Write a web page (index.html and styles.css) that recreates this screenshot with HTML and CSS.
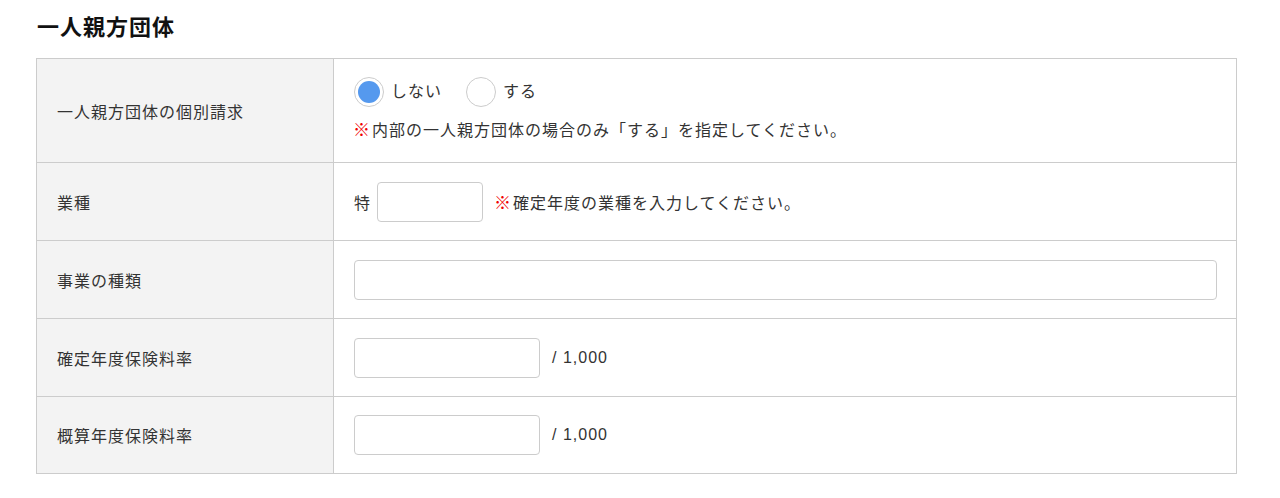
FILE: index.html
```html
<!DOCTYPE html>
<html lang="ja">
<head>
<meta charset="utf-8">
<link rel="stylesheet" href="styles.css">
</head>
<body>
<div class="page">
  <h2 class="title">一人親方団体</h2>
  <table class="form">
    <tr class="row-tall">
      <th>一人親方団体の個別請求</th>
      <td>
        <div class="radios">
          <label class="radio"><span class="dot checked"></span><span>しない</span></label>
          <label class="radio"><span class="dot"></span><span>する</span></label>
        </div>
        <p class="note"><span class="mark">※</span>内部の一人親方団体の場合のみ「する」を指定してください。</p>
      </td>
    </tr>
    <tr>
      <th>業種</th>
      <td>
        <div class="inline">
          <span>特</span>
          <input class="input input-s" type="text">
          <span class="note-inline"><span class="mark">※</span>確定年度の業種を入力してください。</span>
        </div>
      </td>
    </tr>
    <tr>
      <th>事業の種類</th>
      <td><input class="input input-full" type="text"></td>
    </tr>
    <tr>
      <th>確定年度保険料率</th>
      <td>
        <div class="inline rate">
          <input class="input input-m" type="text">
          <span class="num">/ 1,000</span>
        </div>
      </td>
    </tr>
    <tr class="row-last">
      <th>概算年度保険料率</th>
      <td>
        <div class="inline rate">
          <input class="input input-m" type="text">
          <span class="num">/ 1,000</span>
        </div>
      </td>
    </tr>
  </table>
</div>
</body>
</html>
```

FILE: styles.css
```css
* { box-sizing: border-box; }
html, body { margin: 0; padding: 0; background: #fff; }
body {
  font-family: "Liberation Sans", "Noto Sans CJK JP", sans-serif;
  color: #333;
  font-size: 16px;
  letter-spacing: 1px;
}
.page { padding: 12px 43px 0 36px; }
.title {
  margin: 0 0 0 1px;
  font-size: 22px;
  font-weight: bold;
  color: #111;
  line-height: 32px;
  letter-spacing: 1px;
}
.form {
  margin-top: 14px;
  width: 1201px;
  border-collapse: collapse;
}
.form th, .form td {
  border: 1px solid #ccc;
  height: 78px;
  vertical-align: middle;
}
.form .row-tall th, .form .row-tall td { height: 104px; }
.form .row-tall td { vertical-align: top; padding-top: 18px; }
.form .row-last th, .form .row-last td { height: 77px; }
.form th {
  width: 300px;
  background: #f3f3f3;
  text-align: left;
  font-weight: normal;
  padding: 0 20px;
}
.form td { padding: 0 19px 0 20px; }
.radios { display: flex; align-items: center; gap: 24px; }
.radio { display: flex; align-items: center; gap: 7px; line-height: 30px; }
.dot {
  width: 30px; height: 30px;
  border: 1px solid #ccc;
  border-radius: 50%;
  display: inline-flex; align-items: center; justify-content: center;
  background: #fff;
}
.dot.checked::after {
  content: "";
  width: 22px; height: 22px;
  border-radius: 50%;
  background: #5599ee;
}
.note { margin: 14px 0 0 -1px; line-height: 20px; }
.mark {
  color: #f00000;
  font-weight: bold;
  font-size: 17px;
  line-height: 1;
  letter-spacing: 0;
  margin-right: 2px;
}
.inline { display: flex; align-items: center; }
.input {
  height: 40px;
  border: 1px solid #ccc;
  border-radius: 4px;
  background: #fff;
  font: inherit;
  padding: 0 8px;
}
.input-s { width: 106px; margin: 0 11px 0 6px; }
.input-m { width: 186px; margin-right: 12px; }
.input-full { width: 863px; display: block; }
.num { letter-spacing: 1px; }
```
